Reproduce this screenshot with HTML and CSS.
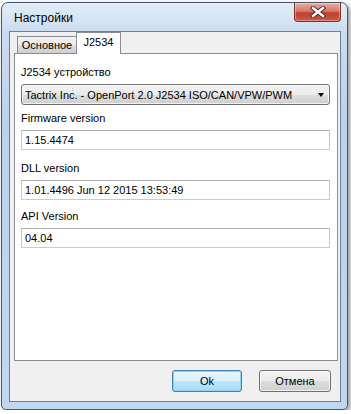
FILE: index.html
```html
<!DOCTYPE html>
<html>

<head>
  <meta charset="utf-8">
  <link rel="stylesheet" href="styles.css">
</head>

<body>
  <div class="window">
    <div class="titlebar">
      <span class="title">Настройки</span>
      <div class="close">
        <svg width="16" height="12" viewBox="0 0 16 12">
          <path d="M3 2 L13 10 M13 2 L3 10" stroke="#5a2a26" stroke-width="4.4" stroke-linecap="square"/>
          <path d="M3 2 L13 10 M13 2 L3 10" stroke="#fff" stroke-width="2.4" stroke-linecap="square"/>
        </svg>
      </div>
    </div>

    <div class="client">
      <div class="tabs">
        <div class="tab">Основное</div>
        <div class="tab active">J2534</div>
      </div>

      <div class="panel">
        <div class="label">J2534 устройство</div>
        <div class="combo">
          <span>Tactrix Inc. - OpenPort 2.0 J2534 ISO/CAN/VPW/PWM</span>
          <span class="arrow"></span>
        </div>

        <div class="label first">Firmware version</div>
        <div class="input">1.15.4474</div>

        <div class="label second">DLL version</div>
        <div class="input">1.01.4496 Jun 12 2015 13:53:49</div>

        <div class="label third">API Version</div>
        <div class="input">04.04</div>
      </div>

      <div class="buttons">
        <div class="btn ok">Ok</div>
        <div class="btn cancel">Отмена</div>
      </div>
    </div>
  </div>
</body>

</html>
```

FILE: styles.css
```css
* {
  box-sizing: border-box;
}

body {
  margin: 0;
  background: #ffffff;
  font-family: "Liberation Sans", Arial, sans-serif;
  font-size: 11px;
  color: #000;
}

.window {
  margin: 2px 0 0 1px;
  width: 347px;
  height: 408px;
  border: 1px solid #45586e;
  border-radius: 7px 7px 5px 5px;
  padding: 0 6px 7px 7px;
  background: linear-gradient(#e3edf8, #cbdcef 30px, #bbd2ec 120px, #c2d7ef);
  box-shadow: 2px 2px 4px rgba(0, 0, 0, 0.45);
}

.titlebar {
  height: 28px;
  display: flex;
  justify-content: space-between;
  align-items: flex-start;
}

.title {
  margin: 8px 0 0 5px;
  font-size: 12px;
  line-height: 15px;
}

.close {
  width: 47px;
  height: 19px;
  border: 1px solid #7b302a;
  border-top: none;
  border-radius: 0 0 4px 4px;
  background: linear-gradient(#e9ad9f, #d57a69 45%, #c0402f 55%, #cd5744);
  display: flex;
  justify-content: center;
  align-items: center;
  box-shadow: inset 0 0 0 1px rgba(255, 255, 255, 0.35);
}

.client {
  width: 332px;
  height: 371px;
  border: 1px solid #6e7f94;
  background: #f0f0f0;
  padding: 0 9px 0 4px;
}

.tabs {
  height: 21px;
  display: flex;
  align-items: flex-end;
  padding-left: 3px;
}

.tab {
  width: 60px;
  height: 17px;
  border: 1px solid #898c95;
  border-bottom: none;
  background: linear-gradient(#f2f2f2, #ebebeb 50%, #dddddd 50%, #cfcfcf);
  text-align: center;
  line-height: 16px;
}

.tab.active {
  width: 45px;
  height: 22px;
  margin: 0 0 -1px -1px;
  background: #fff;
  position: relative;
  z-index: 1;
  line-height: 18px;
}

.panel {
  width: 324px;
  height: 308px;
  border: 1px solid #898c95;
  background: #fff;
  padding: 12px 7px 0 6px;
}

.label {
  line-height: 13px;
  height: 13px;
}

.label.first {
  margin-top: 7px;
}

.label.second {
  margin-top: 12px;
}

.label.third {
  margin-top: 10px;
}

.combo {
  margin-top: 5px;
  height: 21px;
  border: 1px solid #707070;
  border-radius: 3px;
  background: linear-gradient(#f2f2f2, #ebebeb 50%, #dddddd 50%, #cfcfcf);
  box-shadow: inset 0 0 0 1px rgba(255, 255, 255, 0.7);
  display: flex;
  justify-content: space-between;
  align-items: center;
  padding: 0 5px 0 3px;
}

.arrow {
  width: 0;
  height: 0;
  border-left: 3.5px solid transparent;
  border-right: 3.5px solid transparent;
  border-top: 4px solid #000;
}

.input {
  margin-top: 5px;
  height: 20px;
  border: 1px solid #c8cbd2;
  border-top-color: #abadb3;
  padding-left: 3px;
  line-height: 18px;
}

.buttons {
  margin-top: 9px;
  display: flex;
  justify-content: flex-end;
  gap: 17px;
}

.btn {
  height: 22px;
  border-radius: 3px;
  text-align: center;
  line-height: 20px;
}

.ok {
  width: 70px;
  border: 1px solid #3c7fb1;
  background: linear-gradient(#eaf6fd, #d9f0fc 50%, #bee6fd 50%, #a7d9f5);
  box-shadow: inset 0 0 0 1px #8fd3f5;
}

.cancel {
  width: 72px;
  border: 1px solid #707070;
  background: linear-gradient(#f2f2f2, #ebebeb 50%, #dddddd 50%, #cfcfcf);
  box-shadow: inset 0 0 0 1px rgba(255, 255, 255, 0.7);
}
```
